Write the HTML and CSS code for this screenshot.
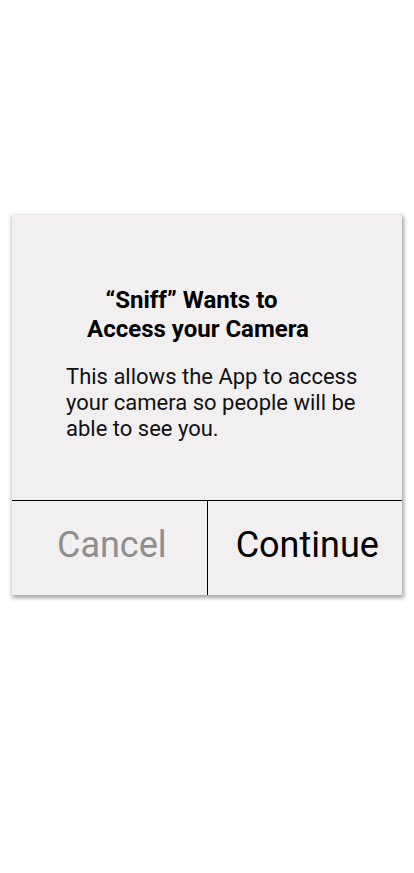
FILE: index.html
```html
<!DOCTYPE html>
<html>
<head>
<meta charset="utf-8">
<link rel="stylesheet" href="styles.css">
</head>
<body>
<div class="page">
  <div class="dialog">
    <div class="content">
      <h1 class="title"><span class="title-line title-line-1">“Sniff” Wants to</span><span class="title-line">Access your Camera</span></h1>
      <p class="message">This allows the App to access your camera so people will be able to see you.</p>
    </div>
    <div class="actions">
      <button class="btn btn-cancel">Cancel</button>
      <button class="btn btn-continue">Continue</button>
    </div>
  </div>
</div>
</body>
</html>
```
FILE: styles.css
```css
html, body {
  margin: 0;
  padding: 0;
  background: #ffffff;
}
body {
  font-family: Roboto, "Liberation Sans", sans-serif;
  width: 414px;
  height: 873px;
  overflow: hidden;
}
.page {
  padding-top: 215px;
  padding-left: 12px;
}
.dialog {
  width: 390px;
  height: 380px;
  background: #f1eff0;
  box-shadow: 1px 2px 4px 1px rgba(0, 0, 0, 0.35);
  display: flex;
  flex-direction: column;
}
.content {
  flex: 1;
  padding: 71px 0 0 0;
  box-sizing: border-box;
}
.title {
  margin: 0 0 0 36px;
  width: 300px;
  text-align: center;
  font-size: 24px;
  line-height: 29px;
  font-weight: 700;
  color: #000;
}
.title-line {
  display: block;
}
.title-line-1 {
  padding-right: 13px;
}
.message {
  margin: 20px 0 0 54px;
  width: 320px;
  font-size: 22px;
  line-height: 26px;
  color: #111;
}
.actions {
  height: 94px;
  border-top: 1px solid #000;
  display: flex;
}
.btn {
  flex: 1;
  border: 0;
  background: transparent;
  font-family: Roboto, "Liberation Sans", sans-serif;
  font-size: 36px;
  padding: 0 0 6px 5px;
}
.btn-cancel {
  color: #8e8e8e;
  border-right: 1px solid #000;
}
.btn-continue {
  color: #000;
}
```
